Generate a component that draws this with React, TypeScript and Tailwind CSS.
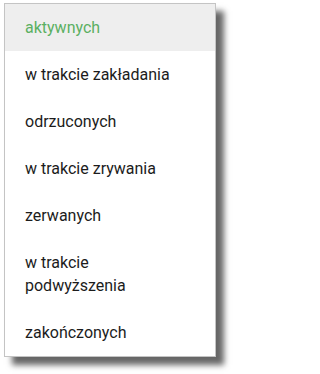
import React from 'react';

const items = [
  'aktywnych',
  'w trakcie zakładania',
  'odrzuconych',
  'w trakcie zrywania',
  'zerwanych',
  'w trakcie podwyższenia',
  'zakończonych',
];

export default function App() {
  return (
    <div className="w-[233px] h-[374px] bg-white pt-[3px] pl-[4px]">
      {/* ─── Dropdown panel ─── */}
      <div className="w-[212px] border border-[#c4c4c4] bg-white shadow-[8px_8px_6px_rgba(0,0,0,0.6)]">
        <ul className="font-['Roboto',sans-serif] text-[16px] leading-[23px] text-[#1c1c1c]">
          {items.map((label, i) => (
            <li
              key={label}
              className={
                i === 0
                  ? 'bg-[#eeeeee] text-[#5bb062] pl-[20px] pr-4 py-[12px]'
                  : i === 5
                    ? 'pl-[20px] pr-4 py-[12px] w-[150px]'
                    : 'pl-[20px] pr-4 py-[12px]'
              }
            >
              {label}
            </li>
          ))}
        </ul>
      </div>
    </div>
  );
}
